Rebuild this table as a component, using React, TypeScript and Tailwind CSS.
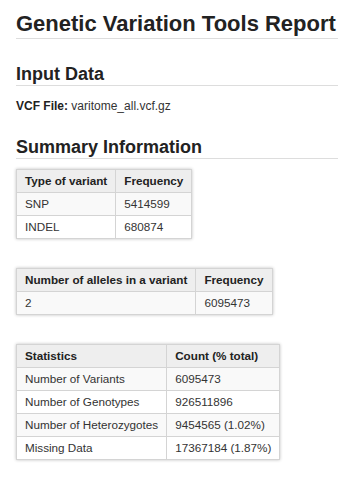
import React from "react";

type Row = [string, string];

const variantTypes: Row[] = [
  ["SNP", "5414599"],
  ["INDEL", "680874"],
];

const alleleCounts: Row[] = [["2", "6095473"]];

const stats: Row[] = [
  ["Number of Variants", "6095473"],
  ["Number of Genotypes", "926511896"],
  ["Number of Heterozygotes", "9454565 (1.02%)"],
  ["Missing Data", "17367184 (1.87%)"],
];

function ReportTable({ head, rows, className }: { head: Row; rows: Row[]; className?: string }) {
  return (
    <table className={`border-collapse shadow-[0_0_3px_rgba(0,0,0,0.25)] text-[11.7px] leading-[14px] text-[#333] ${className ?? ""}`}>
      <thead>
        <tr className="bg-[#eeeeee]">
          {head.map((h) => (
            <th key={h} className="border border-[#d4d4d4] h-[23px] px-2 text-left font-bold text-[#222]">
              {h}
            </th>
          ))}
        </tr>
      </thead>
      <tbody>
        {rows.map((r, i) => (
          <tr key={r[0]} className={i % 2 === 0 ? "bg-[#f9f9f9]" : "bg-white"}>
            {r.map((c, j) => (
              <td key={j} className="border border-[#d4d4d4] h-[23px] px-2 whitespace-nowrap">
                {c}
              </td>
            ))}
          </tr>
        ))}
      </tbody>
    </table>
  );
}

export default function App() {
  return (
    <div className="min-h-screen bg-white px-4 pb-6 text-[#333] font-[family-name:Liberation_Sans,Arial,sans-serif]">
      <h1 className="pt-[11px] text-[22px] leading-[26px] font-bold text-[#222] border-b border-[#dddddd] pb-[1px]">
        Genetic Variation Tools Report
      </h1>

      <h2 className="mt-[25px] text-[18px] leading-[20px] font-bold text-[#222] border-b border-[#dddddd] pb-[1px]">
        Input Data
      </h2>
      <p className="mt-[13px] text-[12px] leading-[14px]">
        <b className="text-[#222]">VCF File:</b> varitome_all.vcf.gz
      </p>

      <h2 className="mt-[24px] text-[18px] leading-[20px] font-bold text-[#222] border-b border-[#dddddd] pb-[1px]">
        Summary Information
      </h2>

      <ReportTable className="mt-[10px]" head={["Type of variant", "Frequency"]} rows={variantTypes} />
      <ReportTable className="mt-[29px]" head={["Number of alleles in a variant", "Frequency"]} rows={alleleCounts} />
      <ReportTable className="mt-[29px]" head={["Statistics", "Count (% total)"]} rows={stats} />
    </div>
  );
}
